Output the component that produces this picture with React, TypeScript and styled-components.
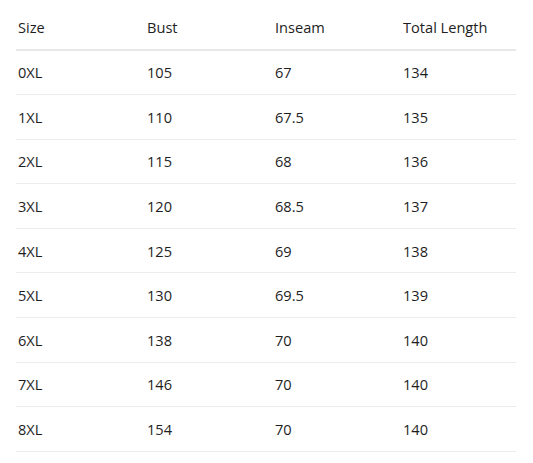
import React from 'react';
import styled, { createGlobalStyle } from 'styled-components';

const headers = ['Size', 'Bust', 'Inseam', 'Total Length'];

const rows = [
  ['0XL', '105', '67', '134'],
  ['1XL', '110', '67.5', '135'],
  ['2XL', '115', '68', '136'],
  ['3XL', '120', '68.5', '137'],
  ['4XL', '125', '69', '138'],
  ['5XL', '130', '69.5', '139'],
  ['6XL', '138', '70', '140'],
  ['7XL', '146', '70', '140'],
  ['8XL', '154', '70', '140'],
];

function App() {
  return (
    <>
      <GlobalStyle />
      <Page>
        <Table>
          <HeadRow>
            {headers.map((h) => (
              <Cell key={h}>{h}</Cell>
            ))}
          </HeadRow>
          {rows.map((r) => (
            <Row key={r[0]}>
              {r.map((v, i) => (
                <Cell key={i}>{v}</Cell>
              ))}
            </Row>
          ))}
        </Table>
      </Page>
    </>
  );
}

const GlobalStyle = createGlobalStyle`
  body {
    margin: 0;
    background: #fff;
    font-family: 'Open Sans', 'Noto Sans', sans-serif;
  }
`;

const Page = styled.div`
  padding-left: 16px;
`;

const Table = styled.div`
  width: 500px;
  color: #1e1e1e;
  font-size: 14.6px;
`;

const Row = styled.div`
  display: grid;
  grid-template-columns: 129px 128px 128px 1fr;
  align-items: center;
  height: 44.6px;
  box-sizing: border-box;
  border-bottom: 1.6px solid #ececec;
`;

const HeadRow = styled(Row)`
  height: 50.5px;
  padding-top: 5px;
  border-bottom: 2px solid #e8e8e8;
`;

const Cell = styled.div`
  padding-left: 2px;
`;

export default App;
